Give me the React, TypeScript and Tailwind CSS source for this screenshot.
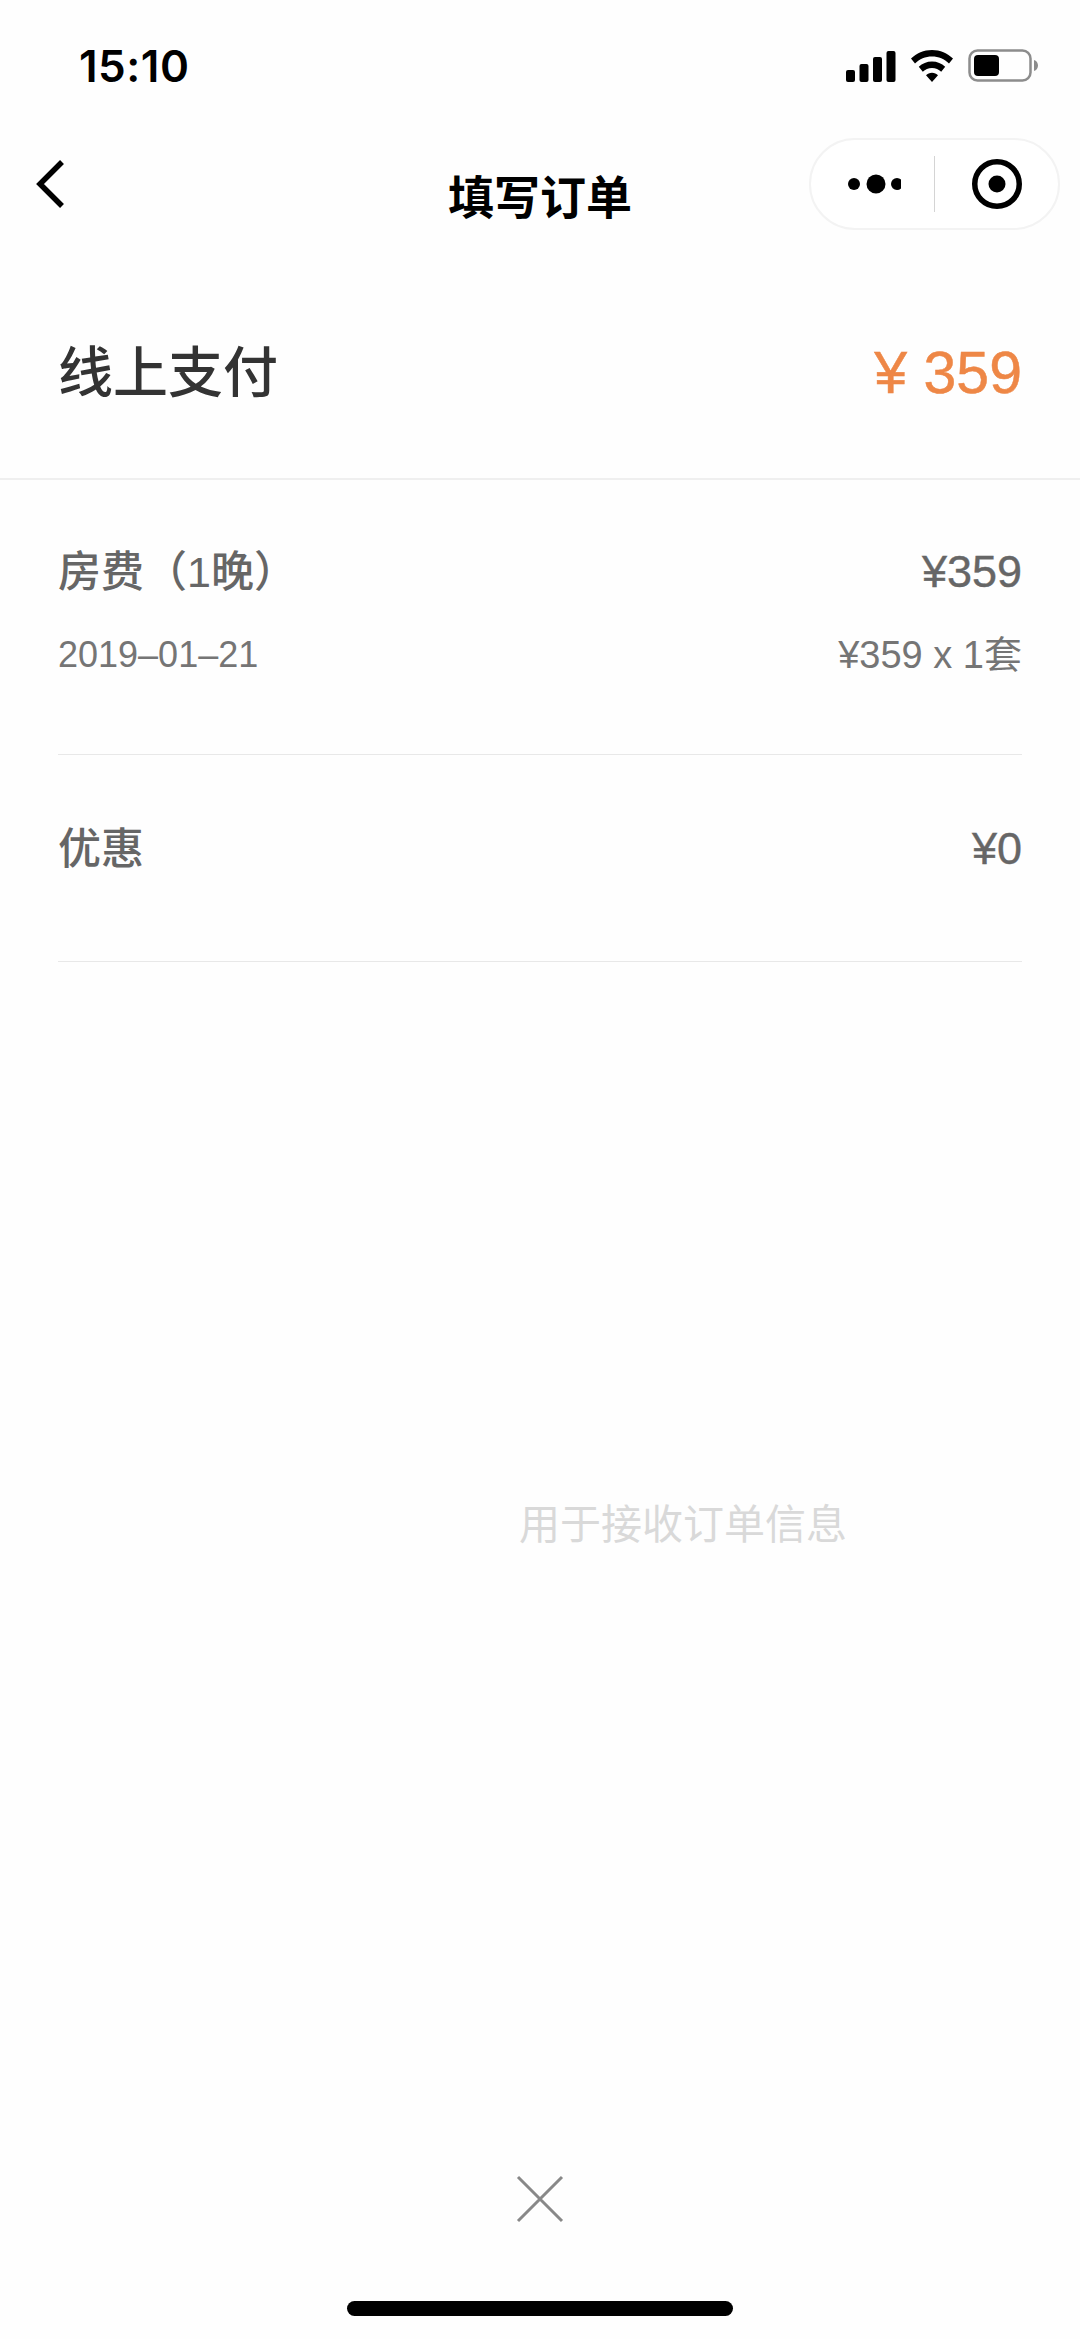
const feeRows = [
  { label: "房费（1晚）", amount: "¥359", date: "2019–01–21", detail: "¥359 x 1套", height: "h-[275px]", pt: "pt-[62px]" },
  { label: "优惠", amount: "¥0", height: "h-[207px]", pt: "pt-[64px]" },
];

function StatusIcons() {
  return (
    <div className="flex items-end">
      <svg width="50" height="32" viewBox="0 0 50 32" fill="#000">
        <rect x="0" y="20" width="9" height="12" rx="2" />
        <rect x="13.500" y="14" width="9" height="18" rx="2" />
        <rect x="27" y="7" width="9" height="25" rx="2" />
        <rect x="40.500" y="1" width="9" height="31" rx="2" />
      </svg>
      <svg className="ml-[14px]" width="44" height="32" viewBox="0 0 44 32" fill="#000">
        <path d="M22 0C13.800 0 6.500 3.300 1 8.500l4 5C9.500 9 15.400 6.500 22 6.500S34.500 9 39 13.500l4-5C37.500 3.300 30.200 0 22 0z" />
        <path d="M22 11.500c-5.200 0-9.700 2-13.200 5.300l4 5C15.200 19.500 18.400 18.100 22 18.100s6.800 1.400 9.200 3.700l4-5C31.700 13.500 27.200 11.500 22 11.500z" />
        <path d="M22 22.800c-2.400 0-4.500.9-6 2.400L22 32l6-6.800C26.500 23.700 24.400 22.800 22 22.800z" />
      </svg>
      <svg className="ml-[14px]" width="71" height="33" viewBox="0 0 71 33">
        <rect x="1.500" y="1.500" width="61" height="30" rx="8" fill="none" stroke="#8c8c8c" strokeWidth="2.500" />
        <rect x="6" y="6" width="25" height="21" rx="4" fill="#000" />
        <path d="M66 11c2.500.8 4 3 4 5.500S68.500 21.200 66 22z" fill="#8c8c8c" />
      </svg>
    </div>
  );
}

function Capsule() {
  return (
    <div className="flex h-[92px] w-[251px] items-center rounded-full border-2 border-[#f3f3f3] bg-white">
      <svg className="ml-[30px]" width="60" height="24" viewBox="0 0 60 24" fill="#000">
        <circle cx="13" cy="12" r="6" />
        <circle cx="35" cy="12" r="9.500" />
        <circle cx="56" cy="12" r="6" />
      </svg>
      <div className="ml-[33px] h-[56px] w-px bg-[#d4d4d4]" />
      <svg className="ml-[35px]" width="54" height="54" viewBox="0 0 54 54" fill="none">
        <circle cx="27" cy="27" r="22.250" stroke="#000" strokeWidth="5.500" />
        <circle cx="27" cy="27" r="8.500" fill="#000" />
      </svg>
    </div>
  );
}

export default function App() {
  return (
    <div className="flex h-[2339px] w-[1080px] flex-col overflow-hidden bg-[#fefefe] font-['Liberation_Sans','Noto_Sans_CJK_SC',sans-serif]">
      {/* status bar */}
      <div className="flex h-[82px] items-end justify-between pr-[41px] pl-[79px]">
        <span className="font-['Inter',sans-serif] text-[44px] leading-[32px] font-semibold tracking-[0.5px] text-black">
          15:10
        </span>
        <StatusIcons />
      </div>

      {/* nav bar */}
      <div className="relative mt-[56px] flex h-[92px] items-center justify-between pr-[20px] pl-[35px]">
        <svg width="32" height="50" viewBox="0 0 32 50" fill="none">
          <path d="M27 3 5 25l22 22" stroke="#000" strokeWidth="5.500" />
        </svg>
        <h1 className="absolute top-[30px] left-0 w-full text-center text-[46px] leading-[60px] font-bold text-black">
          填写订单
        </h1>
        <Capsule />
      </div>

      {/* total */}
      <div className="flex h-[250px] items-center justify-between border-b-2 border-[#efefef] px-[58px] pt-[38px]">
        <span className="text-[55px] leading-[60px] font-medium text-[#333333]">线上支付</span>
        <span className="text-[59px] leading-[60px] text-[#ee8746] [-webkit-text-stroke:0.5px]">¥ 359</span>
      </div>

      {/* fee rows */}
      <div className="px-[58px]">
        {feeRows.map((row) => (
          <div key={row.label} className={`${row.height} ${row.pt} border-b border-[#e8e8e8] text-[#666666]`}>
            <div className="flex items-center justify-between">
              <span className="text-[43px] leading-[60px] font-medium">{row.label}</span>
              <span className="text-[45px] leading-[60px] [-webkit-text-stroke:0.4px]">{row.amount}</span>
            </div>
            {row.date && (
              <div className="mt-[28px] flex items-center justify-between leading-[50px] text-[#757575]">
                <span className="text-[36px]">{row.date}</span>
                <span className="text-[38px]">{row.detail}</span>
              </div>
            )}
          </div>
        ))}
      </div>

      {/* contact field */}
      <div className="mt-[533px] pl-[519px] text-[41px] leading-[60px] text-[#d9d9d9]">用于接收订单信息</div>

      {/* close button */}
      <div className="mt-auto flex justify-center">
        <svg width="48" height="48" viewBox="0 0 48 48" fill="none">
          <path d="M2 2l44 44M46 2 2 46" stroke="#888888" strokeWidth="3" />
        </svg>
      </div>

      {/* home indicator */}
      <div className="mt-[78px] mb-[23px] flex justify-center">
        <div className="h-[15px] w-[386px] rounded-full bg-black" />
      </div>
    </div>
  );
}
